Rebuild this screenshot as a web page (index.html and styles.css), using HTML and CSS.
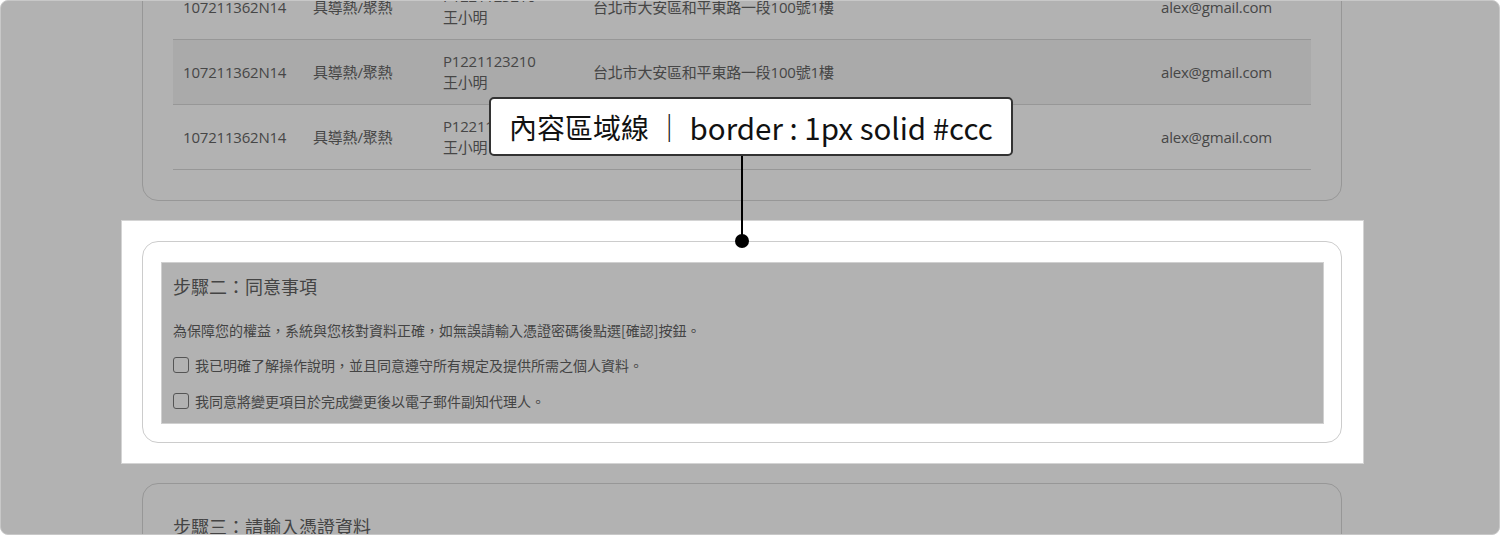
FILE: index.html
```html
<!DOCTYPE html>
<html lang="zh-Hant">
<head>
<meta charset="utf-8">
<title>內容區域線</title>
<link rel="stylesheet" href="styles.css">
</head>
<body>
<div class="frame">
  <div class="col">
    <section class="card card-top">
      <div class="table">
        <div class="row">
          <div class="cell">107211362N14</div>
          <div class="cell">具導熱/聚熱</div>
          <div class="cell two"><span>P1221123210</span><span>王小明</span></div>
          <div class="cell">台北市大安區和平東路一段100號1樓</div>
          <div class="cell">alex@gmail.com</div>
        </div>
        <div class="row hover">
          <div class="cell">107211362N14</div>
          <div class="cell">具導熱/聚熱</div>
          <div class="cell two"><span>P1221123210</span><span>王小明</span></div>
          <div class="cell">台北市大安區和平東路一段100號1樓</div>
          <div class="cell">alex@gmail.com</div>
        </div>
        <div class="row">
          <div class="cell">107211362N14</div>
          <div class="cell">具導熱/聚熱</div>
          <div class="cell two"><span>P1221123210</span><span>王小明</span></div>
          <div class="cell">台北市大安區和平東路一段100號1樓</div>
          <div class="cell">alex@gmail.com</div>
        </div>
      </div>
    </section>

    <div class="spotlight">
      <section class="card card-focus">
        <div class="content-area">
          <h2 class="step-title">步驟二：同意事項</h2>
          <p class="note">為保障您的權益，系統與您核對資料正確，如無誤請輸入憑證密碼後點選[確認]按鈕。</p>
          <label class="check"><span class="box"></span><span>我已明確了解操作說明，並且同意遵守所有規定及提供所需之個人資料。</span></label>
          <label class="check"><span class="box"></span><span>我同意將變更項目於完成變更後以電子郵件副知代理人。</span></label>
        </div>
      </section>
    </div>

    <section class="card card-bottom">
      <h2 class="step-title">步驟三：請輸入憑證資料</h2>
    </section>
  </div>

  <div class="callout">
    <div class="callout-box"><span class="cjk">內容區域線 ｜ </span><span class="latin">border : 1px solid #ccc</span></div>
    <div class="callout-line"></div>
    <div class="callout-dot"></div>
  </div>
</div>
</body>
</html>
```
FILE: styles.css
```css
* { box-sizing: border-box; }
html, body { margin: 0; padding: 0; background: #ffffff; }
body {
  font-family: "Open Sans", "Noto Sans CJK TC", sans-serif;
  color: #464646;
}
.frame {
  position: relative;
  width: 1500px;
  height: 535px;
  border: 1px solid #c8c8c8;
  border-radius: 8px;
  background: #b2b2b2;
  overflow: hidden;
}
.col {
  width: 1200px;
  margin-left: 141px;
}
.card {
  border: 1px solid #979797;
  border-radius: 16px;
}
.card-top {
  margin-top: -57px;
  padding: 30px 30px 30px 30px;
}
.table { display: flex; flex-direction: column; }
.row {
  display: grid;
  grid-template-columns: 130px 130px 150px 1fr 160px;
  height: 65px;
  border-bottom: 1px solid #979797;
  font-size: 15px;
}
.row.hover { background: #aaaaaa; }
.cell {
  display: flex;
  align-items: center;
  padding-left: 10px;
  line-height: 21px;
  white-space: nowrap;
  letter-spacing: -0.2px;
}
.cell.two {
  flex-direction: column;
  justify-content: center;
  align-items: flex-start;
}
.spotlight {
  margin: 19px -22px 19px -21px;
  padding: 20px 21px 20px 20px;
  background: #ffffff;
  border: 1px solid #d4d4d4;
}
.card-focus {
  border-color: #cccccc;
  padding: 20px 17px 18px 18px;
}
.content-area {
  background: #b2b2b2;
  border: 1px solid #d0d0d0;
  padding: 11px 11px 12px 11px;
  font-family: "Noto Sans CJK TC", sans-serif;
}
.step-title {
  margin: 0;
  font-size: 18px;
  line-height: 24px;
  font-weight: 400;
  font-family: "Noto Sans CJK TC", sans-serif;
  color: #444444;
}
.note {
  margin: 22px 0 0 0;
  font-size: 14px;
  line-height: 20px;
  color: #444444;
}
.check {
  display: flex;
  align-items: center;
  gap: 6px;
  font-size: 14px;
  line-height: 20px;
  color: #444444;
  margin-top: 15px;
}
.check + .check { margin-top: 16px; }
.box {
  width: 16px;
  height: 16px;
  border: 1px solid #555555;
  border-radius: 3px;
  flex: none;
}
.card-bottom {
  padding: 30px 30px;
  height: 200px;
}
.callout-box {
  position: absolute;
  left: 488px;
  top: 96px;
  width: 524px;
  height: 59px;
  background: #ffffff;
  border: 2px solid #333333;
  border-radius: 5px;
  display: flex;
  align-items: center;
  padding-left: 18px;
  color: #111111;
  font-family: "Noto Sans CJK TC", sans-serif;
  white-space: pre;
}
.callout-box .cjk { font-size: 28px; }
.callout-box .latin { font-size: 29.5px; }
.callout-line {
  position: absolute;
  left: 740px;
  top: 155px;
  width: 2px;
  height: 85px;
  background: #000000;
}
.callout-dot {
  position: absolute;
  left: 734px;
  top: 233px;
  width: 14px;
  height: 14px;
  border-radius: 50%;
  background: #000000;
}
```
